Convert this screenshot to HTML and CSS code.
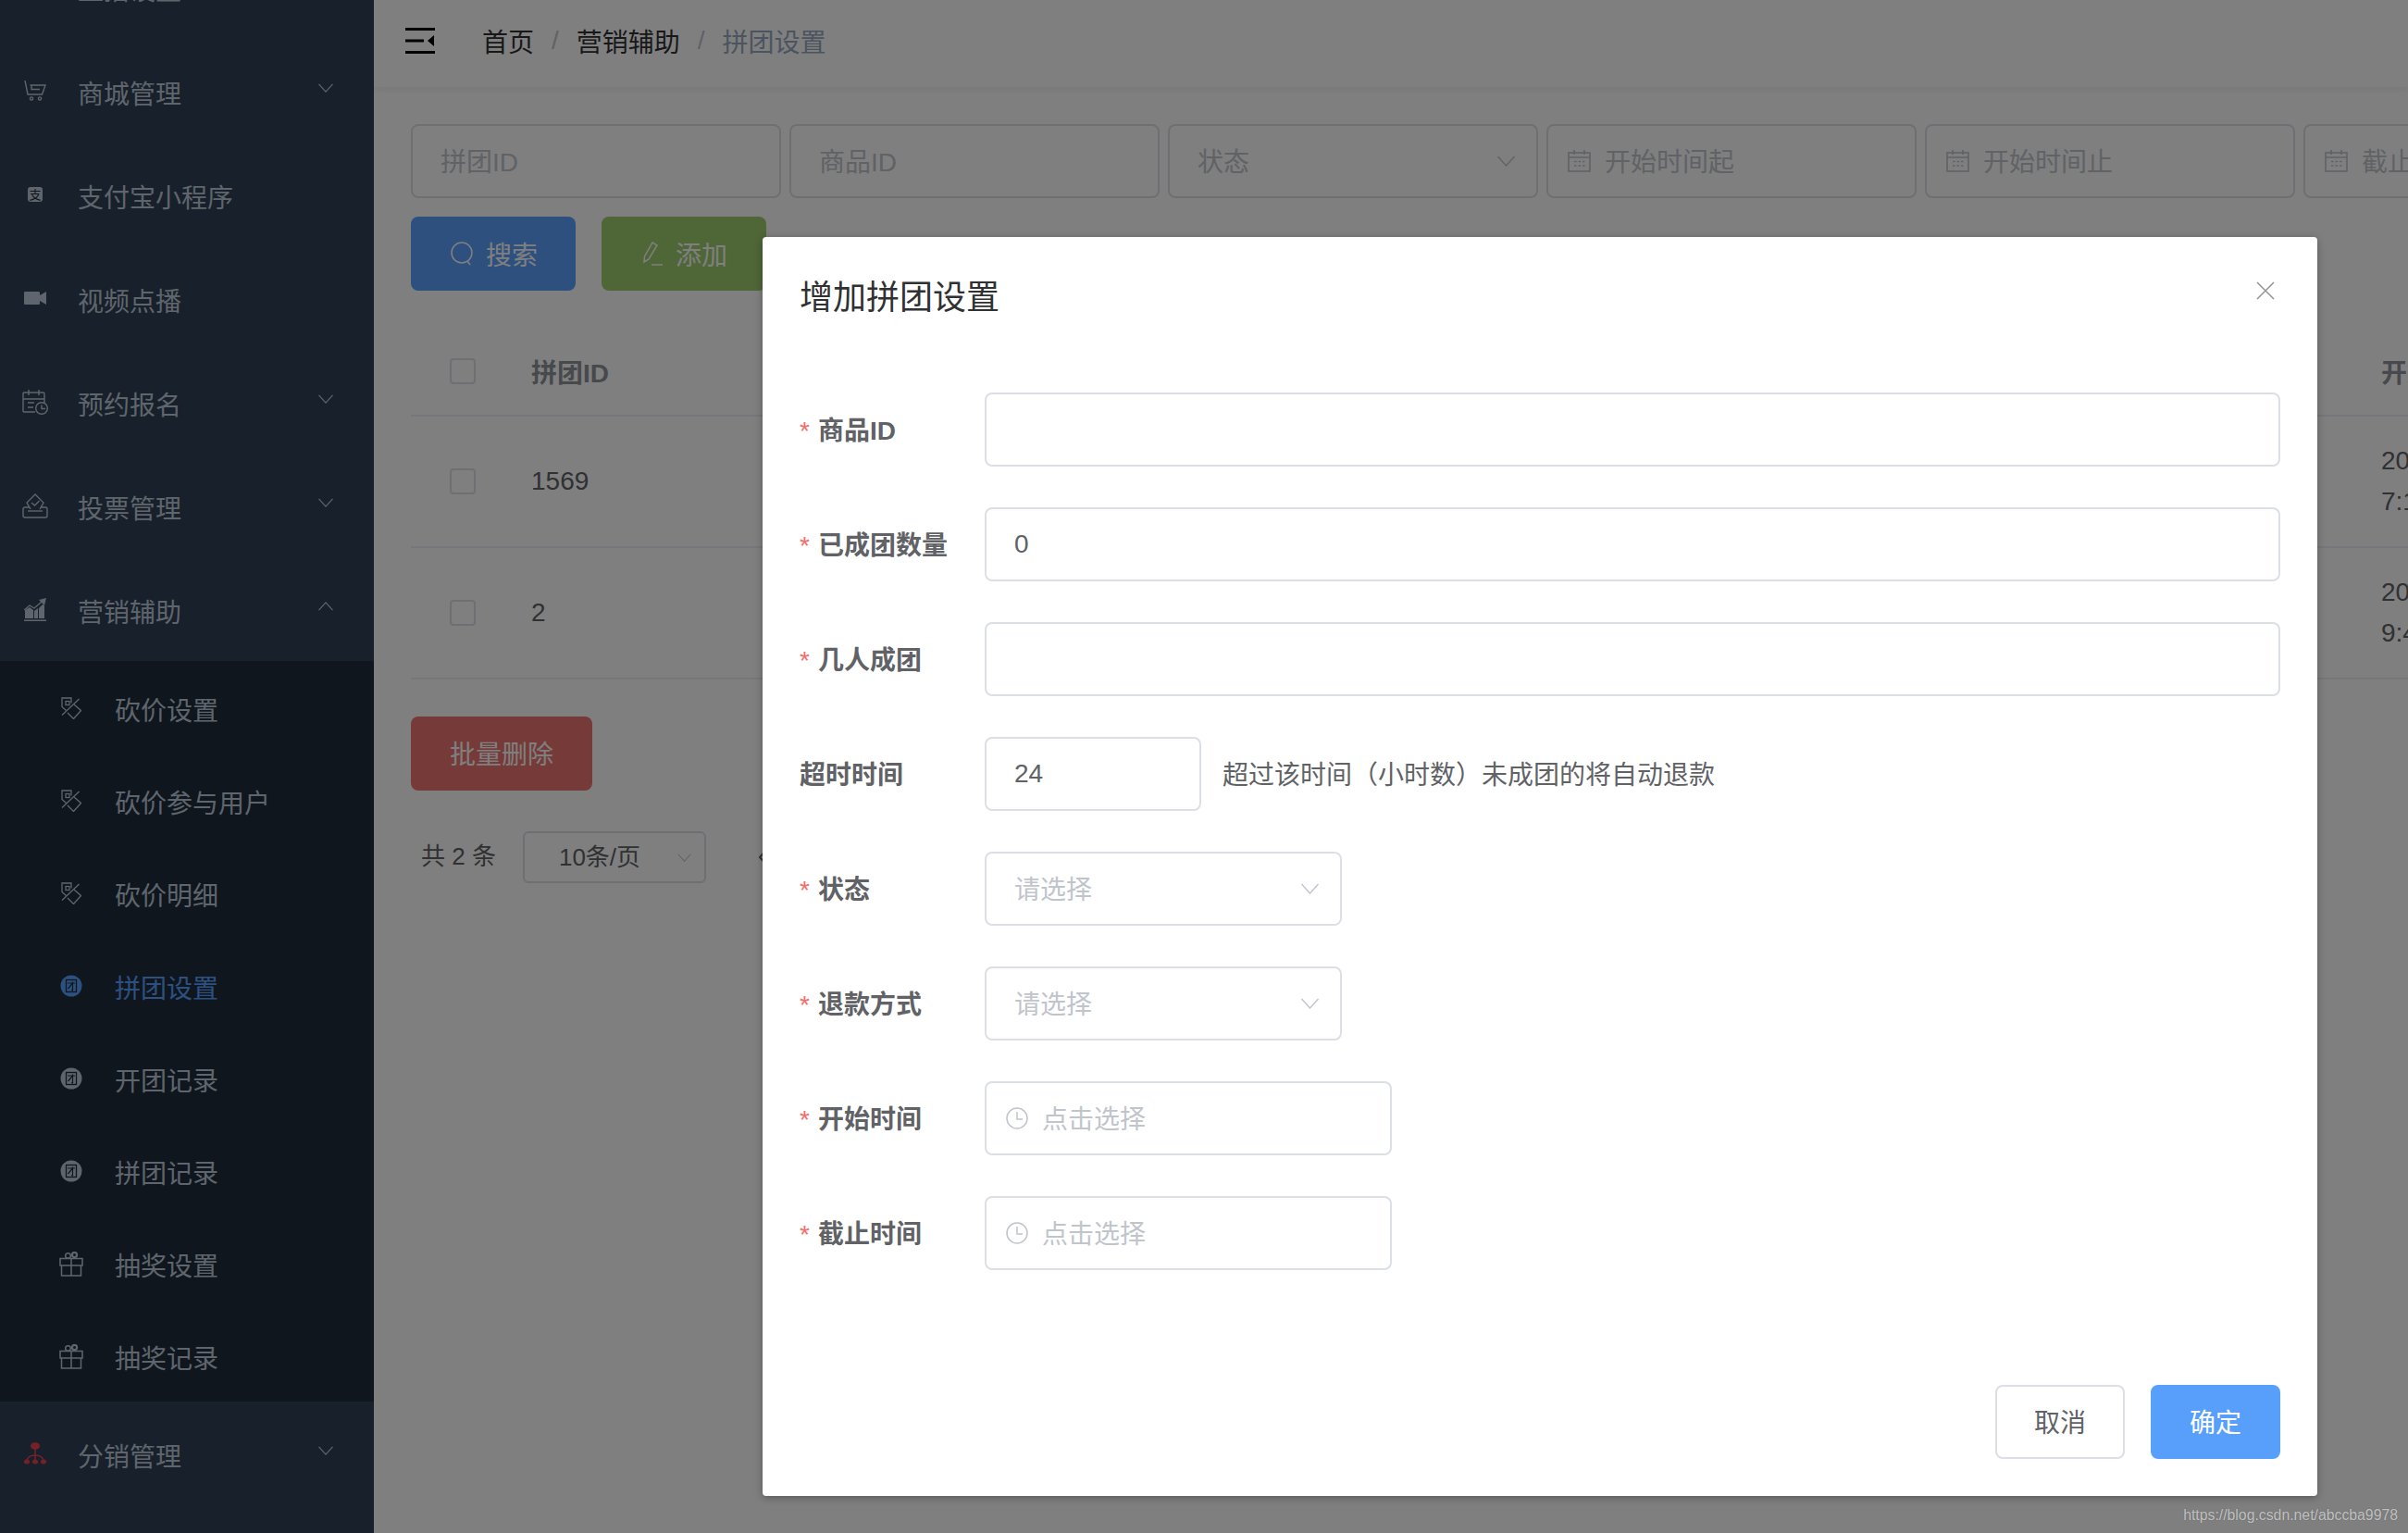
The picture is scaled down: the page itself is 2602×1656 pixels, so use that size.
FILE: index.html
```html
<!DOCTYPE html>
<html lang="zh-CN">
<head>
<meta charset="utf-8">
<title>拼团设置</title>
<link rel="stylesheet" href="styles.css">
</head>
<body>
<svg class="defs" width="0" height="0" aria-hidden="true">
  <symbol id="i-chev" viewBox="0 0 20 12"><path d="M1 1l9 10 9-10" fill="none" stroke="currentColor" stroke-width="1.4"/></symbol>
  <symbol id="i-tag" viewBox="0 0 22 24"><g fill="none" stroke="currentColor" stroke-width="1.300"><path d="M11 6.500V1H1v9.500l4.500 4"/><path d="M1 19.500L19.500 2"/><path d="M14 8l7.500 6.500-8 9-6.500-6.500"/><rect x="5" y="4.500" width="4" height="4"/></g></symbol>
  <symbol id="i-tuan" viewBox="0 0 24 24"><circle cx="12" cy="12" r="11.500" fill="currentColor"/><rect x="6.500" y="5.500" width="11" height="13" fill="none" stroke="#1f2d3d" stroke-width="1.300"/><path d="M8 9h8M13.500 7.500V17l-1.500-.5M13 9.500L8.500 15" fill="none" stroke="#1f2d3d" stroke-width="1.200"/></symbol>
  <symbol id="i-gift" viewBox="0 0 26 27"><g fill="none" stroke="currentColor" stroke-width="1.500"><path d="M1 7.500h24V15H1zM2.500 15V26h21V15M13 7.500V26"/><circle cx="9.500" cy="4.500" r="2.800"/><circle cx="16.500" cy="3.500" r="2.600" stroke-width="2.200"/></g></symbol>
  <symbol id="i-cal" viewBox="0 0 25 24"><g fill="none" stroke="currentColor" stroke-width="1.600"><rect x="1" y="3" width="23" height="20"/><path d="M1 8h23M7 0v5M18 0v5"/><path d="M7 12.500h2.500M11.500 12.500H14M16 12.500h2.500M7 17h2.500M11.500 17H14M16 17h2.500" stroke-width="1.400"/></g></symbol>
  <symbol id="i-clock" viewBox="0 0 24 24"><g fill="none" stroke="currentColor" stroke-width="1.500"><circle cx="12" cy="12" r="11"/><path d="M12 5v8h6"/></g></symbol>
</svg>

<div class="app">
  <aside class="sidebar">
    <nav class="menu">
      <div class="item"><span class="ico"></span><span class="lbl">直播设置</span></div>
      <div class="item">
        <span class="ico"><svg width="24" height="22" viewBox="0 0 24 22"><g fill="none" stroke="currentColor" stroke-width="1.400"><path d="M1 0l3 15h15.500L23 5H6.500"/><path d="M8 5v4.500h9"/><circle cx="8" cy="19.500" r="1.600"/><circle cx="17" cy="19.500" r="1.600"/></g></svg></span>
        <span class="lbl">商城管理</span>
        <svg class="arrow"><use href="#i-chev"/></svg>
      </div>
      <div class="item">
        <span class="ico"><svg width="16" height="16" viewBox="0 0 16 16"><rect width="16" height="16" rx="3" fill="currentColor"/><text x="8" y="13" class="glyph-mini" text-anchor="middle">支</text></svg></span>
        <span class="lbl">支付宝小程序</span>
      </div>
      <div class="item">
        <span class="ico"><svg width="24" height="14" viewBox="0 0 24 14"><path d="M0 1q0-1 1-1h15q1 0 1 1v3l7-4v14l-7-4v3q0 1-1 1H1q-1 0-1-1z" fill="currentColor"/></svg></span>
        <span class="lbl">视频点播</span>
      </div>
      <div class="item">
        <span class="ico"><svg width="28" height="27" viewBox="0 0 28 27"><g fill="none" stroke="currentColor" stroke-width="1.400"><path d="M14 24H2q-1 0-1-1V4q0-1 1-1h21q1 0 1 1v10"/><path d="M1 10h23M7 0v6M18 0v6M6 14h7M6 19h6"/><circle cx="21" cy="20" r="6.300"/><path d="M21 16.500V20.500h4"/></g></svg></span>
        <span class="lbl">预约报名</span>
        <svg class="arrow"><use href="#i-chev"/></svg>
      </div>
      <div class="item">
        <span class="ico"><svg width="28" height="27" viewBox="0 0 28 27"><g fill="none" stroke="currentColor" stroke-width="1.400"><path d="M9 17l-4-7 9-9 9 9-4 7"/><path d="M10 10l3.500 3 5-5"/><path d="M8 15H3q-2 0-2 2v7q0 2 2 2h22q2 0 2-2v-7q0-2-2-2h-5"/><path d="M6 19h16"/></g></svg></span>
        <span class="lbl">投票管理</span>
        <svg class="arrow"><use href="#i-chev"/></svg>
      </div>
      <div class="item">
        <span class="ico"><svg width="24" height="25" viewBox="0 0 24 25"><path d="M0 23.500h24V25H0zM1 22V13l5-3 4 3v9zM11 22v-8l4-3v11zM16 22V11l4-4 2 1v14z" fill="currentColor"/><path d="M0 13l6-5 5 3 8-7" fill="none" stroke="currentColor" stroke-width="1.300"/><path d="M16 2l8-2-2 8z" fill="currentColor"/></svg></span>
        <span class="lbl">营销辅助</span>
        <svg class="arrow up"><use href="#i-chev"/></svg>
      </div>
      <div class="submenu">
        <div class="subitem"><span class="subico"><svg width="22" height="24"><use href="#i-tag"/></svg></span><span class="lbl">砍价设置</span></div>
        <div class="subitem"><span class="subico"><svg width="22" height="24"><use href="#i-tag"/></svg></span><span class="lbl">砍价参与用户</span></div>
        <div class="subitem"><span class="subico"><svg width="22" height="24"><use href="#i-tag"/></svg></span><span class="lbl">砍价明细</span></div>
        <div class="subitem active"><span class="subico"><svg width="24" height="24"><use href="#i-tuan"/></svg></span><span class="lbl">拼团设置</span></div>
        <div class="subitem"><span class="subico"><svg width="24" height="24"><use href="#i-tuan"/></svg></span><span class="lbl">开团记录</span></div>
        <div class="subitem"><span class="subico"><svg width="24" height="24"><use href="#i-tuan"/></svg></span><span class="lbl">拼团记录</span></div>
        <div class="subitem"><span class="subico"><svg width="26" height="27"><use href="#i-gift"/></svg></span><span class="lbl">抽奖设置</span></div>
        <div class="subitem"><span class="subico"><svg width="26" height="27"><use href="#i-gift"/></svg></span><span class="lbl">抽奖记录</span></div>
      </div>
      <div class="item">
        <span class="ico red"><svg width="24" height="24" viewBox="0 0 24 24"><ellipse cx="12" cy="4" rx="5" ry="3.800" fill="currentColor"/><path d="M12 7v14M3 20c1-5 6-6 9-6s8 1 9 6" fill="none" stroke="currentColor" stroke-width="1.500"/><ellipse cx="3" cy="21" rx="3" ry="2.500" fill="currentColor"/><ellipse cx="12" cy="21" rx="3" ry="2.500" fill="currentColor"/><ellipse cx="21" cy="21" rx="3" ry="2.500" fill="currentColor"/></svg></span>
        <span class="lbl">分销管理</span>
        <svg class="arrow"><use href="#i-chev"/></svg>
      </div>
    </nav>
  </aside>

  <main class="main">
    <header class="topbar">
      <svg class="hamburger" width="32" height="28" viewBox="0 0 32 28"><path d="M0 0h32v3H0zM0 25h32v3H0zM0 12.500h20v3H0z" fill="currentColor"/><path d="M31 8v12l-7-6z" fill="currentColor"/></svg>
      <div class="crumbs">
        <span class="crumb">首页</span><span class="sep">/</span>
        <span class="crumb">营销辅助</span><span class="sep">/</span>
        <span class="crumb last">拼团设置</span>
      </div>
    </header>

    <section class="content">
      <div class="filters">
        <div class="field fbox"><span class="ph">拼团ID</span></div>
        <div class="field fbox"><span class="ph">商品ID</span></div>
        <div class="field fbox between"><span class="ph">状态</span><svg class="chev"><use href="#i-chev"/></svg></div>
        <div class="field fbox date"><svg class="cal"><use href="#i-cal"/></svg><span class="ph">开始时间起</span></div>
        <div class="field fbox date"><svg class="cal"><use href="#i-cal"/></svg><span class="ph">开始时间止</span></div>
        <div class="field fbox date"><svg class="cal"><use href="#i-cal"/></svg><span class="ph">截止时间起</span></div>
      </div>
      <div class="actions">
        <button class="btn blue"><svg width="24" height="26" viewBox="0 0 24 26"><g fill="none" stroke="currentColor" stroke-width="1.600"><circle cx="12" cy="12" r="11"/><path d="M18 21l3 4"/></g></svg>搜索</button>
        <button class="btn green"><svg width="22" height="26" viewBox="0 0 22 26"><g fill="none" stroke="currentColor" stroke-width="1.500"><path d="M11 1l5 3-9 15-5 3 .5-6z"/><path d="M10 25h12"/></g></svg>添加</button>
      </div>

      <div class="table">
        <div class="row head"><span class="cell-check"><i class="check"></i></span><span>拼团ID</span><span>开始时间</span></div>
        <div class="row"><span class="cell-check"><i class="check"></i></span><span>1569</span><span class="stack">2020-10-20<br>7:12:00</span></div>
        <div class="row"><span class="cell-check"><i class="check"></i></span><span>2</span><span class="stack">2020-10-20<br>9:40:00</span></div>
      </div>

      <button class="btn red wide">批量删除</button>

      <div class="pager">
        <span class="total">共 2 条</span>
        <span class="size">10条/页<svg class="size-chev"><use href="#i-chev"/></svg></span>
        <svg class="prev" width="12" height="20" viewBox="0 0 12 20"><path d="M10 1L2 10l8 9" fill="none" stroke="currentColor" stroke-width="2"/></svg>
      </div>
    </section>
  </main>
</div>

<div class="mask"></div>

<div class="dialog">
  <div class="dlg-head">
    <span class="dlg-title">增加拼团设置</span>
    <svg class="dlg-close" width="20" height="20" viewBox="0 0 20 20"><path d="M1 1l18 18M19 1L1 19" fill="none" stroke="currentColor" stroke-width="1.500"/></svg>
  </div>
  <div class="dlg-body">
    <div class="frow"><label class="flabel"><b class="star">*</b>商品ID</label><div class="inp full"></div></div>
    <div class="frow"><label class="flabel"><b class="star">*</b>已成团数量</label><div class="inp full">0</div></div>
    <div class="frow"><label class="flabel"><b class="star">*</b>几人成团</label><div class="inp full"></div></div>
    <div class="frow"><label class="flabel">超时时间</label><div class="inp short">24</div><span class="hint">超过该时间（小时数）未成团的将自动退款</span></div>
    <div class="frow"><label class="flabel"><b class="star">*</b>状态</label><div class="inp sel"><span class="pholder">请选择</span><svg class="chev"><use href="#i-chev"/></svg></div></div>
    <div class="frow"><label class="flabel"><b class="star">*</b>退款方式</label><div class="inp sel"><span class="pholder">请选择</span><svg class="chev"><use href="#i-chev"/></svg></div></div>
    <div class="frow"><label class="flabel"><b class="star">*</b>开始时间</label><div class="inp dt"><svg class="clock"><use href="#i-clock"/></svg><span class="pholder">点击选择</span></div></div>
    <div class="frow"><label class="flabel"><b class="star">*</b>截止时间</label><div class="inp dt"><svg class="clock"><use href="#i-clock"/></svg><span class="pholder">点击选择</span></div></div>
  </div>
  <div class="dlg-foot">
    <button class="dbtn">取消</button>
    <button class="dbtn primary">确定</button>
  </div>
</div>

<div class="watermark">https://blog.csdn.net/abccba9978</div>
</body>
</html>
```

FILE: styles.css
```css
* { box-sizing: border-box; }
html, body { margin: 0; height: 1656px; overflow: hidden; background: #fff; }
body {
  font-family: "Liberation Sans", "Noto Sans CJK SC", sans-serif;
  font-size: 28px;
  color: #606266;
  position: relative;
}
.defs { position: absolute; }
button { font: inherit; border: 0; padding: 0; }

.app { display: flex; height: 1656px; }

/* sidebar */
.sidebar { flex: 0 0 404px; background: #304156; overflow: hidden; color: #bfcbd9; }
.menu { margin-top: -70px; }
.item { height: 112px; display: flex; align-items: center; padding-left: 24px; position: relative; }
.ico { flex: 0 0 28px; margin-right: 32px; display: flex; justify-content: center; align-items: center; }
.ico.red { color: #f04050; }
.lbl { padding-top: 4px; }
.arrow { position: absolute; left: 343px; top: 48px; width: 18px; height: 10px; }
.arrow.up { transform: rotate(180deg); }
.submenu { background: #1f2d3d; }
.subitem { height: 100px; display: flex; align-items: center; padding-left: 62px; }
.subico { flex: 0 0 30px; margin-right: 32px; display: flex; justify-content: center; padding-top: 2px; }
.subitem.active { color: #5aa0ff; }
.glyph-mini { font-size: 13px; fill: #1f2d3d; }

/* main */
.main { flex: 1; min-width: 0; overflow: hidden; background: #fff; }
.topbar { height: 94px; display: flex; align-items: center; padding: 0 0 6px 34px; box-shadow: 0 2px 8px rgba(0, 21, 41, .08); position: relative; }
.hamburger { color: #000; margin-right: 51px; }
.crumbs { display: flex; align-items: center; color: #303133; }
.sep { margin: 0 19px; color: #c0c4cc; }
.crumb.last { color: #97a8be; }

.content { padding: 40px 0 0 40px; }
.filters { display: flex; gap: 9px; }
.field { flex: 0 0 400px; }
.fbox { height: 80px; border: 2px solid #dcdfe6; border-radius: 8px; padding: 0 30px; display: flex; align-items: center; }
.fbox.between { justify-content: space-between; padding-right: 22px; }
.fbox.date { padding-left: 21px; }
.ph { color: #c0c4cc; white-space: nowrap; padding-bottom: 3px; }
.cal { width: 25px; height: 24px; color: #c0c4cc; margin-right: 15px; flex: none; }
.chev { width: 21px; height: 12px; color: #c0c4cc; flex: none; }

.actions { display: flex; gap: 28px; margin-top: 20px; }
.btn { height: 80px; border-radius: 8px; color: #fff; display: flex; align-items: center; justify-content: center; gap: 14px; width: 178px; padding-left: 2px; }
.btn.blue { background: #5aa0ff; }
.btn.green { background: #9ecc6e; }
.btn.red { background: #ec7470; }
.btn.wide { width: 196px; margin-top: 40px; padding: 0 0 2px; }

.table { margin-top: 40px; }
.row { display: grid; grid-template-columns: 130px 1999px 240px; align-items: center; height: 142px; border-bottom: 2px solid #ebeef5; width: 2369px; }
.row.head { height: 96px; font-weight: 700; color: #909399; }
.cell-check { padding-left: 42px; display: flex; }
.check { width: 28px; height: 28px; border: 2px solid #dcdfe6; border-radius: 4px; display: block; }
.stack { line-height: 44px; }

.pager { display: flex; align-items: center; margin-top: 44px; padding-left: 11px; font-size: 26px; color: #606266; }
.total { margin-right: 29px; padding-bottom: 7px; }
.size { width: 198px; height: 56px; border: 2px solid #dcdfe6; border-radius: 6px; display: flex; align-items: center; padding: 0 0 5px 37px; position: relative; white-space: nowrap; }
.size-chev { width: 15px; height: 9px; color: #c0c4cc; position: absolute; right: 14px; top: 22px; }
.prev { margin-left: 56px; color: #606266; }

/* modal */
.mask { position: absolute; inset: 0; background: rgba(0, 0, 0, .5); }
.dialog { position: absolute; left: 824px; top: 256px; width: 1680px; background: #fff; border-radius: 4px; box-shadow: 0 2px 8px rgba(0, 0, 0, .3); }
.dlg-head { padding: 40px 40px 20px; position: relative; }
.dlg-title { display: block; font-size: 36px; line-height: 48px; color: #303133; padding-top: 2px; height: 48px; }
.dlg-close { position: absolute; left: 1614px; top: 48px; color: #909399; }
.dlg-body { padding: 60px 40px 60px; }
.frow { display: flex; align-items: center; margin-bottom: 44px; height: 80px; }
.flabel { flex: 0 0 200px; font-weight: 700; color: #606266; padding-bottom: 3px; }
.star { color: #f56c6c; font-weight: 400; margin-right: 9px; }
.inp { height: 80px; border: 2px solid #dcdfe6; border-radius: 8px; padding: 0 30px; display: flex; align-items: center; color: #606266; }
.inp.full { flex: 1; }
.inp.short { width: 234px; }
.inp.sel { width: 386px; justify-content: space-between; padding-right: 22px; }
.inp.dt { width: 440px; padding-left: 21px; }
.pholder { color: #c0c4cc; padding-bottom: 3px; }
.clock { width: 24px; height: 24px; color: #c0c4cc; margin-right: 15px; flex: none; }
.hint { margin-left: 23px; color: #606266; padding-bottom: 3px; }
.dlg-foot { padding: 20px 40px 40px; display: flex; justify-content: flex-end; gap: 28px; }
.dbtn { width: 140px; height: 80px; border: 2px solid #dcdfe6; border-radius: 8px; background: #fff; color: #606266; padding-bottom: 2px; }
.dbtn.primary { background: #589ffb; border-color: #589ffb; color: #fff; }

.watermark { position: absolute; right: 11px; top: 1628px; font-size: 15.8px; line-height: 18px; color: rgba(255, 255, 255, .65); text-shadow: 0 0 1px rgba(0, 0, 0, .4); }
```
